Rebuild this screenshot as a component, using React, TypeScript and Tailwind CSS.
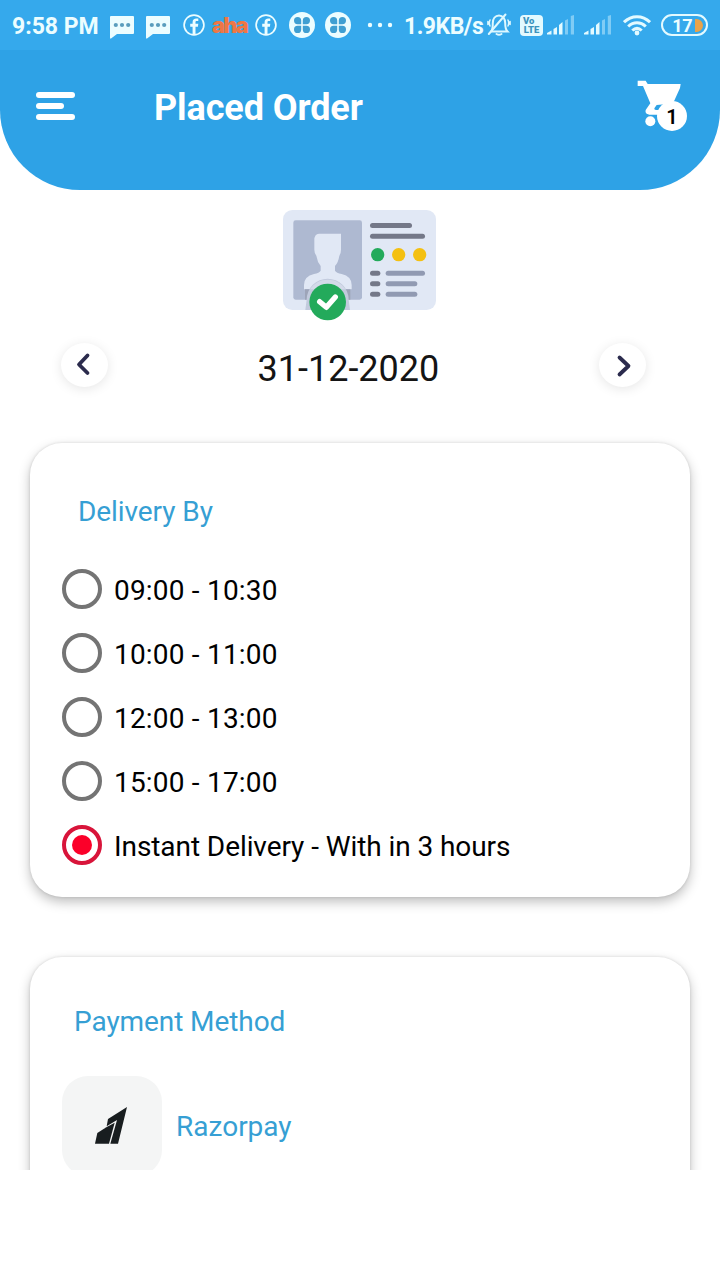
import React, { useState } from "react";
import clsx from "clsx";

const ChatIcon = ({ className }: { className?: string }) => (
  <svg width="24" height="24" viewBox="0 0 24 24" className={clsx("shrink-0", className)}>
    <path d="M1 0h22a1 1 0 0 1 1 1v16a1 1 0 0 1-1 1H7l-6 4.500q-1 .5-1-1V1a1 1 0 0 1 1-1z" fill="#ecfdff" />
    <g fill="#5a9dbd">
      <circle cx="5.8" cy="9" r="2.1" />
      <circle cx="12" cy="9" r="2.1" />
      <circle cx="18.2" cy="9" r="2.1" />
    </g>
  </svg>
);

const FacebookIcon = ({ className }: { className?: string }) => (
  <svg width="22" height="22" viewBox="0 0 22 22" className={clsx("shrink-0", className)}>
    <circle cx="11" cy="11" r="9.9" fill="none" stroke="#ecfdff" strokeWidth="1.7" />
    <path
      d="M9.6 20v-7.3H7.2V9.800h2.400V8.200c0-2.600 1.400-3.800 3.800-3.800h1.900v2.700h-1.500c-1 0-1.300.5-1.300 1.300v1.400h2.800l-.4 2.900h-2.400V20z"
      fill="#ecfdff"
    />
  </svg>
);

const CloverIcon = ({ className }: { className?: string }) => (
  <svg width="26" height="26" viewBox="0 0 26 26" className={clsx("shrink-0", className)}>
    <circle cx="13" cy="13" r="13" fill="#ecfdff" />
    <g fill="#3f9fd2">
      <path d="M12.2 12.2H8.6a3.6 3.6 0 1 1 3.6-3.6z" />
      <path d="M13.8 12.2h3.6a3.6 3.6 0 1 0-3.6-3.6z" />
      <path d="M12.2 13.8H8.6a3.6 3.6 0 1 0 3.6 3.6z" />
      <path d="M13.8 13.8h3.6a3.6 3.6 0 1 1-3.6 3.6z" />
    </g>
  </svg>
);

const BellOffIcon = ({ className }: { className?: string }) => (
  <svg
    width="24"
    height="24"
    viewBox="0 0 24 24"
    fill="none"
    stroke="#ddf8ff"
    strokeWidth="2"
    strokeLinecap="round"
    className={clsx("shrink-0", className)}
  >
    <path d="M4.200 18.500h16.300c-2-2-2.300-3.600-2.300-8.500 0-4.400-2.400-7.600-6.200-7.600S5.800 5.600 5.800 10c0 4.900-.2 6.500-1.600 8.500" />
    <path d="M18.500 1.500 1.800 21" />
    <path d="M9.500 21q2.500 1.600 5 0" />
    <path d="M3 7q-1.400 3 0 6M.9 8.500v3M21 7q1.400 3 0 6M23.100 8.500v3" strokeWidth="1.500" />
  </svg>
);

const SignalIcon = ({ className }: { className?: string }) => (
  <svg width="27" height="20" viewBox="0 0 27 20" className={clsx("shrink-0", className)}>
    <g fill="#e3faff">
      <path d="M0 18 4.500 15.500v4H0z" />
      <path d="M6.500 14 10 12v7.500H6.500z" />
      <path d="M12 10 15.500 7v12.500H12z" />
    </g>
    <g fill="#80ccf5">
      <path d="M18 5.500 21 4v15.500h-3z" />
      <path d="M23.800 1 27 0v19.500h-3.200z" />
    </g>
  </svg>
);

const WifiIcon = ({ className }: { className?: string }) => (
  <svg
    width="28"
    height="22"
    viewBox="0 0 28 22"
    fill="none"
    stroke="#e3faff"
    strokeWidth="3"
    className={clsx("shrink-0", className)}
  >
    <path d="M1 8.200C8.500.8 19.500.8 27 8.200" />
    <path d="M5.200 12.500c5.200-5 12.400-5 17.600 0" />
    <path d="M9.300 16.500c2.900-2.700 6.500-2.700 9.400 0" />
    <circle cx="14" cy="19" r="2.400" fill="#e3faff" stroke="none" />
  </svg>
);

const StatusBar = () => (
  <div className="flex h-[50px] items-center bg-[#35a9ec] pl-[12px] text-[23px] leading-[28px] font-bold whitespace-nowrap text-[#ecfdff]">
    <span className="mt-[4px] w-[87px]">9:58 PM</span>
    <ChatIcon className="mt-[5px] ml-[11px]" />
    <ChatIcon className="mt-[5px] ml-[12px]" />
    <FacebookIcon className="ml-[13px]" />
    <span className="ml-[7px] w-[35px] font-[Inter] text-[22px] font-black tracking-[-1.8px] text-[#ee7745]">
      aha
    </span>
    <FacebookIcon className="ml-[8px]" />
    <CloverIcon className="ml-[12px]" />
    <CloverIcon className="ml-[10px]" />
    <svg width="26" height="6" viewBox="0 0 26 6" fill="#ecfdff" className="ml-[16px] shrink-0">
      <circle cx="3" cy="3" r="2.200" />
      <circle cx="13" cy="3" r="2.200" />
      <circle cx="23" cy="3" r="2.200" />
    </svg>
    <span className="mt-[4px] ml-[11px] w-[80px] tracking-[-0.5px]">1.9KB/s</span>
    <BellOffIcon className="ml-[3px]" />
    <span className="ml-[9px] flex h-[21px] w-[23px] shrink-0 flex-col items-center justify-center rounded-[4px] bg-[#e3faff] text-[9.5px] leading-[9px] font-black text-[#3b93bd]">
      <span className="self-start pl-[3px]">Vo</span>
      <span>LTE</span>
    </span>
    <SignalIcon className="ml-[4px]" />
    <SignalIcon className="ml-[10px]" />
    <WifiIcon className="ml-[12px]" />
    <span className="ml-[10px] flex h-[22px] w-[47px] shrink-0 items-center justify-end gap-[3px] rounded-full border-2 border-[#e3faff] pr-[3px] text-[18px] leading-[20px]">
      <span className="pt-[1px] tracking-[-0.5px]">17</span>
      <span className="h-[13px] w-[8px] rounded-r-full bg-[#e9a34a]" />
    </span>
  </div>
);

const CartIcon = () => (
  <svg width="50" height="50" viewBox="112 60 150 150" fill="#fff">
    <path d="M114 62h24l6 10h99l-2 12-18 40q-4 7-10 7l-42 4-7 10q-1 5 5 5h38v14h-58q-14-2-11-14l14-20-22-52h-16z" />
    <circle cx="152" cy="184" r="15" />
  </svg>
);

const Header = () => (
  <header className="flex h-[140px] items-start rounded-b-[80px] bg-[#2ea2e6] pr-[33px] pl-[36px]">
    <button className="mt-[42px] flex w-[39px] flex-col gap-[5px]">
      <span className="h-[6px] w-[39px] rounded-full bg-white" />
      <span className="h-[5.5px] w-[28px] rounded-full bg-white" />
      <span className="h-[6px] w-[39px] rounded-full bg-white" />
    </button>
    <h1 className="mt-[36px] ml-[79px] text-[36px] leading-[44px] font-bold tracking-[-0.1px] text-white">
      Placed Order
    </h1>
    <button className="relative mt-[30px] ml-auto">
      <CartIcon />
      <span className="absolute top-[21px] left-[20px] flex size-[30px] items-center justify-center rounded-full bg-white pt-[2px] text-[20px] font-semibold text-black">
        1
      </span>
    </button>
  </header>
);

const IdCard = () => (
  <svg width="153" height="111" viewBox="39 30 459 333" className="ml-[253px]">
    <rect x="39" y="30" width="459" height="300" rx="28" fill="#e1e8f5" />
    <rect x="70" y="61" width="206" height="238" rx="7" fill="#aeb9d1" />
    <path
      d="M147 101h66v48q0 12-5 18-3 20-13 31v14q4 7 20 10 30 7 30 33v13H102v-13q0-26 30-33 16-3 20-10v-14q-10-12-13-31-6-7-6-18v-28q0-20 14-20z"
      fill="#e1e8f5"
    />
    <path d="M105 268h136v31H105z" fill="#9da4b8" />
    <path d="M110 299a63 63 0 0 1 126 0l4 31H106z" fill="#c2cadd" />
    <path d="M120 268a63 63 0 0 1 106 0z" fill="#d3dae9" />
    <g fill="#747888">
      <rect x="300" y="69" width="126" height="15" rx="7.5" />
      <rect x="300" y="101" width="165" height="15" rx="7.5" />
      <rect x="300" y="212" width="31" height="15" rx="7.5" />
      <rect x="300" y="244" width="31" height="15" rx="7.5" />
      <rect x="300" y="275" width="31" height="15" rx="7.5" />
    </g>
    <g fill="#919ab2">
      <rect x="347" y="212" width="118" height="15" rx="7.5" />
      <rect x="347" y="244" width="95" height="15" rx="7.5" />
      <rect x="347" y="275" width="95" height="15" rx="7.5" />
    </g>
    <circle cx="323" cy="164" r="20" fill="#23aa5b" />
    <circle cx="386" cy="164" r="20" fill="#f4c011" />
    <circle cx="449" cy="164" r="20" fill="#f4c011" />
    <circle cx="173" cy="306" r="55" fill="#23aa5b" />
    <path
      d="M149 305l20 17 27-31"
      fill="none"
      stroke="#fff"
      strokeWidth="16"
      strokeLinecap="round"
      strokeLinejoin="round"
    />
  </svg>
);

const ArrowButton = ({ d }: { d: string }) => (
  <button className="h-[44px] w-[47px] rounded-[50%] bg-white shadow-[0_2px_12px_rgba(0,0,0,0.1)]">
    <svg
      width="47"
      height="44"
      viewBox="0 0 47 44"
      fill="none"
      stroke="#2b2b4d"
      strokeWidth="3.8"
      strokeLinecap="round"
      strokeLinejoin="round"
    >
      <path d={d} />
    </svg>
  </button>
);

const slots = [
  "09:00 - 10:30",
  "10:00 - 11:00",
  "12:00 - 13:00",
  "15:00 - 17:00",
  "Instant Delivery - With in 3 hours",
];

const DeliveryCard = () => {
  const [selected, setSelected] = useState(4);

  return (
    <section className="mt-[56px] h-[454px] rounded-[32px] bg-white px-[32px] pt-[49px] shadow-[0_5px_12px_rgba(0,0,0,0.25),0_0_3px_rgba(0,0,0,0.12)]">
      <h2 className="pl-[16px] text-[28px] leading-[40px] tracking-[-0.08px] text-[#369fd4]">
        Delivery By
      </h2>
      <ul className="mt-[25px]">
        {slots.map((slot, index) => (
          <li
            key={slot}
            className="flex h-[64px] items-center gap-[12px]"
            onClick={() => setSelected(index)}
          >
            <span
              className={clsx(
                "flex size-[40px] items-center justify-center rounded-full border-4",
                index === selected ? "border-[#d8143a]" : "border-[#747474]"
              )}
            >
              {index === selected && <span className="size-[20px] rounded-full bg-[#fb0029]" />}
            </span>
            <span
              className={clsx(
                "pt-[4px] text-[28px] leading-[40px] text-black",
                /^\d/.test(slot) ? "tracking-[0.2px]" : "tracking-[-0.08px]"
              )}
            >
              {slot}
            </span>
          </li>
        ))}
      </ul>
    </section>
  );
};

const PaymentCard = () => (
  <section className="mt-[60px] h-[300px] rounded-[32px] bg-white px-[32px] pt-[45px] shadow-[0_5px_12px_rgba(0,0,0,0.25),0_0_3px_rgba(0,0,0,0.12)]">
    <h2 className="pl-[12px] text-[28px] leading-[40px] tracking-[-0.08px] text-[#369fd4]">
      Payment Method
    </h2>
    <div className="mt-[34px] flex items-center gap-[14px]">
      <span className="flex size-[100px] items-center justify-center rounded-[26px] bg-[#f4f5f5] pr-[2px] pb-[2px]">
        <svg width="32" height="37" viewBox="0 0 96 111" fill="#181d1f">
          <path d="M96 0 69 110H46L66 39 35 58l4-22z" />
          <path d="M59 47 42 110H0L7 78 34 61z" />
        </svg>
      </span>
      <span className="pt-[2px] text-[28px] leading-[40px] text-[#369fd4]">Razorpay</span>
    </div>
  </section>
);

const App: React.FC = () => {
  return (
    <div className="h-[1280px] w-[720px] bg-white font-[Roboto,sans-serif]">
      <div className="h-[1170px] overflow-hidden">
        <div className="bg-white">
          <StatusBar />
          <Header />
        </div>
        <main className="px-[30px] pt-[20px]">
          <IdCard />
          <div className="mt-[22px] flex h-[44px] items-center justify-between pr-[44px] pl-[31px]">
            <ArrowButton d="M26.500 12.500 18 21.500 26.500 30" />
            <span className="mr-[12px] w-[180px] pt-[7px] text-[36px] leading-[44px] whitespace-nowrap text-[#141414]">
              31-12-2020
            </span>
            <ArrowButton d="M20.500 14.500 29.500 23 20.500 31.500" />
          </div>
          <DeliveryCard />
          <PaymentCard />
        </main>
      </div>
    </div>
  );
};

export default App;
